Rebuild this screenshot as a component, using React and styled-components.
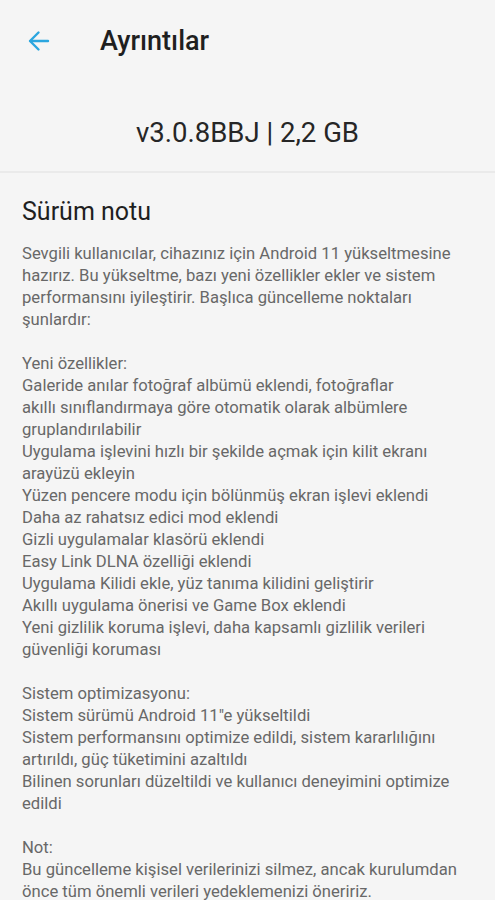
import React from 'react';
import styled, { createGlobalStyle } from 'styled-components';

const GlobalStyle = createGlobalStyle`
  html, body {
    margin: 0;
    padding: 0;
    background: #f5f5f5;
  }
  body {
    font-family: Roboto, "Noto Sans", sans-serif;
  }
`;

const Root = styled.div`
  width: 495px;
  height: 900px;
  overflow: hidden;
  background: #f5f5f5;
`;

const TopBar = styled.header`
  display: flex;
  align-items: center;
  height: 82px;
  padding-left: 26px;
`;

const BackButton = styled.button`
  display: flex;
  align-items: center;
  justify-content: center;
  width: 26px;
  height: 26px;
  padding: 0;
  border: none;
  background: none;
  margin-right: 48px;
  cursor: pointer;
`;

const Title = styled.h1`
  margin: 0;
  font-size: 27px;
  font-weight: 500;
  color: #1f1f1f;
`;

const Version = styled.div`
  display: flex;
  align-items: center;
  justify-content: center;
  height: 77px;
  padding-top: 12px;
  font-size: 27.5px;
  color: #262626;
`;

const Divider = styled.hr`
  margin: 0;
  border: none;
  height: 2px;
  background: #eaeaea;
`;

const Notes = styled.section`
  padding: 22px 22px 0;
`;

const NotesTitle = styled.h2`
  margin: 0 0 15px;
  font-size: 25px;
  font-weight: 400;
  color: #1f1f1f;
  line-height: 33px;
`;

const Body = styled.div`
  font-size: 16.65px;
  line-height: 22px;
  color: #686868;
`;

const Line = styled.div`
  white-space: nowrap;
  height: 22px;
`;

const lines = [
  'Sevgili kullanıcılar, cihazınız için Android 11 yükseltmesine',
  'hazırız. Bu yükseltme, bazı yeni özellikler ekler ve sistem',
  'performansını iyileştirir. Başlıca güncelleme noktaları',
  'şunlardır:',
  '',
  'Yeni özellikler:',
  'Galeride anılar fotoğraf albümü eklendi, fotoğraflar',
  'akıllı sınıflandırmaya göre otomatik olarak albümlere',
  'gruplandırılabilir',
  'Uygulama işlevini hızlı bir şekilde açmak için kilit ekranı',
  'arayüzü ekleyin',
  'Yüzen pencere modu için bölünmüş ekran işlevi eklendi',
  'Daha az rahatsız edici mod eklendi',
  'Gizli uygulamalar klasörü eklendi',
  'Easy Link DLNA özelliği eklendi',
  'Uygulama Kilidi ekle, yüz tanıma kilidini geliştirir',
  'Akıllı uygulama önerisi ve Game Box eklendi',
  'Yeni gizlilik koruma işlevi, daha kapsamlı gizlilik verileri',
  'güvenliği koruması',
  '',
  'Sistem optimizasyonu:',
  'Sistem sürümü Android 11"e yükseltildi',
  'Sistem performansını optimize edildi, sistem kararlılığını',
  'artırıldı, güç tüketimini azaltıldı',
  'Bilinen sorunları düzeltildi ve kullanıcı deneyimini optimize',
  'edildi',
  '',
  'Not:',
  'Bu güncelleme kişisel verilerinizi silmez, ancak kurulumdan',
  'önce tüm önemli verileri yedeklemenizi öneririz.',
];

const BackArrow = () => (
  <svg width="24" height="24" viewBox="0 0 24 24" fill="none" stroke="#2ba6df" strokeWidth="2.4" strokeLinecap="round" strokeLinejoin="round">
    <path d="M21 12H3.5" />
    <path d="M11.5 3.5L3 12l8.5 8.5" />
  </svg>
);

export default function App() {
  return (
    <Root>
      <GlobalStyle />
      <TopBar>
        <BackButton aria-label="Geri">
          <BackArrow />
        </BackButton>
        <Title>Ayrıntılar</Title>
      </TopBar>
      <Version>v3.0.8BBJ | 2,2 GB</Version>
      <Divider />
      <Notes>
        <NotesTitle>Sürüm notu</NotesTitle>
        <Body>
          {lines.map((text, i) => (
            <Line key={i}>{text}</Line>
          ))}
        </Body>
      </Notes>
    </Root>
  );
}
